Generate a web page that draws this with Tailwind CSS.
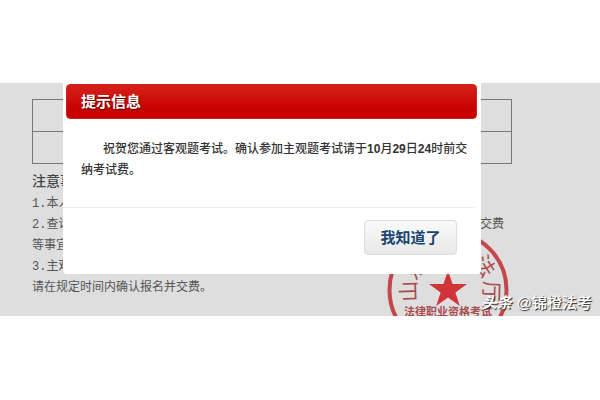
<!DOCTYPE html>
<html lang="zh-CN">
<head>
  <meta charset="utf-8">
  <meta name="viewport" content="width=device-width, initial-scale=1">
  <title>提示信息</title>
  <script src="https://cdn.jsdelivr.net/npm/@tailwindcss/browser@4"></script>
</head>
<body class="bg-white pt-[83px] font-['Liberation_Sans','Noto_Sans_CJK_SC',sans-serif]">
  <main class="relative h-[233px] overflow-hidden bg-[#dedede] pt-4 pr-[88px] pl-8 text-xs text-[#555]">
    <table class="w-full border-collapse" aria-label="成绩">
      <tbody>
        <tr class="h-8"><td class="border border-[#777]"></td></tr>
        <tr class="h-8"><td class="border border-[#777]"></td></tr>
      </tbody>
    </table>

    <h2 class="mt-1 text-sm leading-[26px] font-medium text-[#444]">注意事项</h2>
    <div class="font-['Liberation_Mono','Noto_Sans_CJK_SC',monospace] leading-[21px]">
      <p>1.本人</p>
      <p class="flex justify-between pr-2"><span>2.查询</span><span>交费</span></p>
      <p>等事宜</p>
      <p>3.主观</p>
      <p>请在规定时间内确认报名并交费。</p>
    </div>

    <!-- seal -->
    <svg class="absolute right-[90px] bottom-[-36px] h-[124px] w-[124px]" viewBox="-62 -62 124 124" fill="#a84c50" font-family="'Noto Sans CJK SC', sans-serif" text-anchor="middle" aria-hidden="true">
      <circle r="58.5" fill="none" stroke="#c5474b" stroke-width="4"/>
      <path d="M0 -19L4.6 -6H19L7.4 2.4L11.8 16L0 7.6L-11.8 16L-7.4 2.4L-19 -6H-4.6Z" fill="#cf3438"/>
      <g font-size="21">
        <text transform="rotate(-92) translate(0 -32)">山</text>
        <text transform="rotate(-57) translate(0 -32)">东</text>
        <text transform="rotate(-20) translate(0 -32)">省</text>
        <text transform="rotate(20) translate(0 -32)">司</text>
        <text transform="rotate(57) translate(0 -36)">法</text>
        <text transform="rotate(92) translate(0 -36)">厅</text>
      </g>
      <text y="26" font-size="11" font-weight="700">法律职业资格考试</text>
    </svg>

    <section role="dialog" aria-labelledby="dialogTitle" class="absolute top-0 right-[119px] left-[63px] h-[191px] rounded-b-sm bg-white">
      <header class="mt-px mr-1 ml-[3px] flex h-[35px] items-center rounded border border-[#c22] bg-linear-to-b from-[#d5201a] to-[#c80000] to-70% px-[14px]">
        <h1 id="dialogTitle" class="text-[15px] leading-none font-bold text-white text-shadow-[1px_1px_1px_#500]">提示信息</h1>
      </header>
      <p class="mt-5 h-[68px] pr-3 pl-[18px] indent-[22px] text-xs leading-[21px] font-medium text-[#333]">祝贺您通过客观题考试。确认参加主观题考试请于<b>10</b>月<b>29</b>日<b>24</b>时前交纳考试费。</p>
      <footer class="mr-1.5 flex justify-end border-t border-[#eee] pt-3 pr-[18px]">
        <button type="button" class="h-[35px] w-[93px] rounded border border-[#ddd] bg-linear-to-b from-[#fafafa] to-[#e9e9e9] text-[15px] font-bold text-[#174572]">我知道了</button>
      </footer>
    </section>

    <p class="absolute right-2 bottom-0.5 flex gap-[5px] text-[15px] leading-[22px] font-medium text-white text-shadow-[1px_1px_1px_#222]">
      <span class="font-bold italic">头条</span><span>@锦橙法考</span>
    </p>
  </main>
</body>
</html>
